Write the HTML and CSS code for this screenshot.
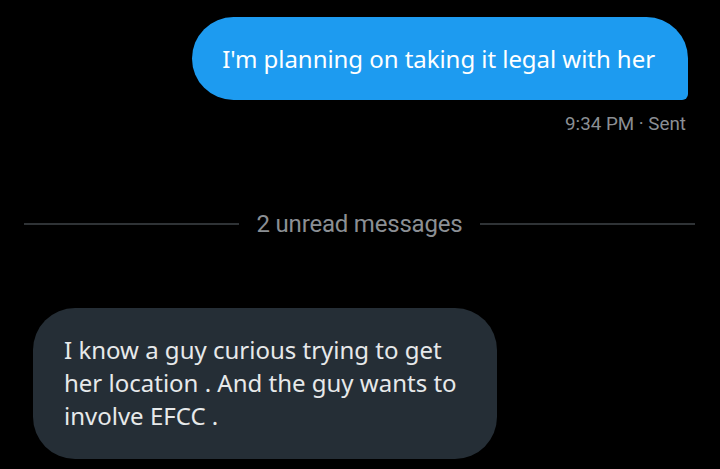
FILE: index.html
```html
<!DOCTYPE html>
<html>
<head>
<meta charset="utf-8">
<link rel="stylesheet" href="styles.css">
</head>
<body>
<main class="chat">
  <div class="row sent">
    <div class="bubble out">I'm planning on taking it legal with her</div>
    <div class="meta">9:34 PM · Sent</div>
  </div>
  <div class="divider">
    <span class="line"></span>
    <span class="label">2 unread messages</span>
    <span class="line"></span>
  </div>
  <div class="row received">
    <div class="bubble in">I know a guy curious trying to get her location . And the guy wants to involve EFCC .</div>
  </div>
</main>
</body>
</html>
```
FILE: styles.css
```css
html, body {
  margin: 0;
  padding: 0;
  background: #000;
}
.chat {
  display: flex;
  flex-direction: column;
  padding-top: 17px;
}
.row {
  display: flex;
  flex-direction: column;
}
.sent {
  align-items: flex-end;
  padding-right: 32px;
}
.bubble {
  font-family: "Noto Sans", "Open Sans", sans-serif;
  font-size: 24px;
  line-height: 33px;
  box-sizing: border-box;
}
.out {
  background: #1d9bf0;
  color: #fff;
  padding: 25px 33px 25px 30px;
  border-radius: 42px 42px 6px 42px;
  white-space: nowrap;
  letter-spacing: -0.05px;
}
.meta {
  font-family: Roboto, "Liberation Sans", sans-serif;
  font-size: 18.8px;
  line-height: 24px;
  color: #8b8f94;
  margin-top: 12px;
  margin-right: 2px;
}
.divider {
  display: flex;
  align-items: center;
  gap: 18px;
  padding: 0 25px 0 24px;
  margin-top: 74px;
}
.line {
  flex: 1;
  height: 2px;
  background: #2f3336;
}
.label {
  font-family: Roboto, "Liberation Sans", sans-serif;
  font-size: 24px;
  line-height: 28px;
  color: #8b8f94;
  letter-spacing: -0.2px;
}
.received {
  align-items: flex-start;
  padding-left: 33px;
  margin-top: 70px;
}
.in {
  background: #252e36;
  color: #e7e9ea;
  width: 464px;
  padding: 25px 30px 27px 31px;
  border-radius: 42px;
}
```
